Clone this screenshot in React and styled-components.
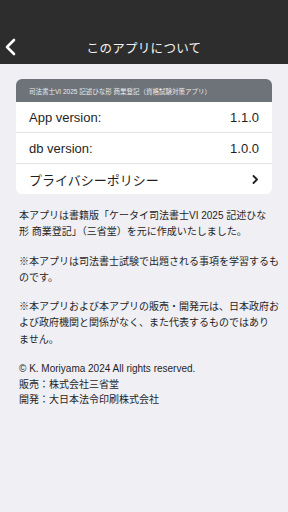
import React from 'react';
import styled, { createGlobalStyle } from 'styled-components';

const GlobalStyle = createGlobalStyle`
  html, body {
    margin: 0;
    padding: 0;
    background: #efeff4;
    font-family: "Liberation Sans", "Noto Sans CJK JP", sans-serif;
  }
`;

const Screen = styled.div`
  width: 288px;
  min-height: 512px;
  background: #efeff4;
  display: flex;
  flex-direction: column;
`;

const NavBar = styled.header`
  height: 64px;
  background: #2d2d2d;
  display: flex;
  align-items: flex-end;
  box-sizing: border-box;
  padding-bottom: 1px;
`;

const NavInner = styled.div`
  height: 32px;
  width: 100%;
  display: grid;
  grid-template-columns: 40px 1fr 40px;
  align-items: center;
`;

const BackButton = styled.div`
  display: flex;
  align-items: center;
  padding-left: 4px;
`;

const Title = styled.h1`
  margin: 0;
  text-align: center;
  color: #f4f4f4;
  font-size: 12.5px;
  font-weight: 400;
  letter-spacing: 0.3px;
`;

const Card = styled.section`
  margin: 15px 16px 0;
  background: #ffffff;
  border-radius: 6px;
  overflow: hidden;
`;

const CardHead = styled.div`
  height: 23px;
  background: #6e7379;
  color: #e9eaec;
  font-size: 6.5px;
  display: flex;
  align-items: center;
  padding: 0 13px;
`;

const Row = styled.div`
  height: 30px;
  display: flex;
  align-items: center;
  justify-content: space-between;
  padding: 0 13px;
  font-size: 13px;
  color: #1f1f1f;
  border-top: ${(props) => (props.first ? 'none' : '1px solid #e2e2e6')};
`;

const Body = styled.div`
  padding: 14px 2px 0 19px;
  color: #1f1f1f;
  font-size: 10px;
  white-space: nowrap;
`;

const Para = styled.p`
  margin: 0 0 ${(props) => props.gap || 13}px;
  line-height: ${(props) => props.lh || 16.3}px;
`;

const Chevron = () => (
  <svg width="14" height="18" viewBox="0 0 14 18">
    <path d="M10 2 L3 9 L10 16" fill="none" stroke="#fff" strokeWidth="2.6" strokeLinecap="round" strokeLinejoin="round" />
  </svg>
);

const SmallChevron = () => (
  <svg width="7" height="9" viewBox="0 0 7 9">
    <path d="M1.5 1 L5 4.5 L1.5 8" fill="none" stroke="#1f1f1f" strokeWidth="1.8" strokeLinecap="round" strokeLinejoin="round" />
  </svg>
);

const App = () => {
  return (
    <Screen>
      <GlobalStyle />
      <NavBar>
        <NavInner>
          <BackButton>
            <Chevron />
          </BackButton>
          <Title>このアプリについて</Title>
          <div />
        </NavInner>
      </NavBar>
      <Card>
        <CardHead>司法書士VI 2025 記述ひな形 商業登記（資格試験対策アプリ）</CardHead>
        <Row first>
          <span>App version:</span>
          <span>1.1.0</span>
        </Row>
        <Row>
          <span>db version:</span>
          <span>1.0.0</span>
        </Row>
        <Row>
          <span>プライバシーポリシー</span>
          <SmallChevron />
        </Row>
      </Card>
      <Body>
        <Para gap={13.4}>
          本アプリは書籍版「ケータイ司法書士VI 2025 記述ひな<br />
          形 商業登記」（三省堂）を元に作成いたしました。
        </Para>
        <Para gap={12.4}>
          ※本アプリは司法書士試験で出題される事項を学習するも<br />
          のです。
        </Para>
        <Para gap={13.5}>
          ※本アプリおよび本アプリの販売・開発元は、日本政府お<br />
          よび政府機関と関係がなく、また代表するものではあり<br />
          ません。
        </Para>
        <Para lh={15.5} gap={0.1}>
          © K. Moriyama 2024 All rights reserved.<br />
          販売：株式会社三省堂<br />
          開発：大日本法令印刷株式会社
        </Para>
      </Body>
    </Screen>
  );
};

export default App;
